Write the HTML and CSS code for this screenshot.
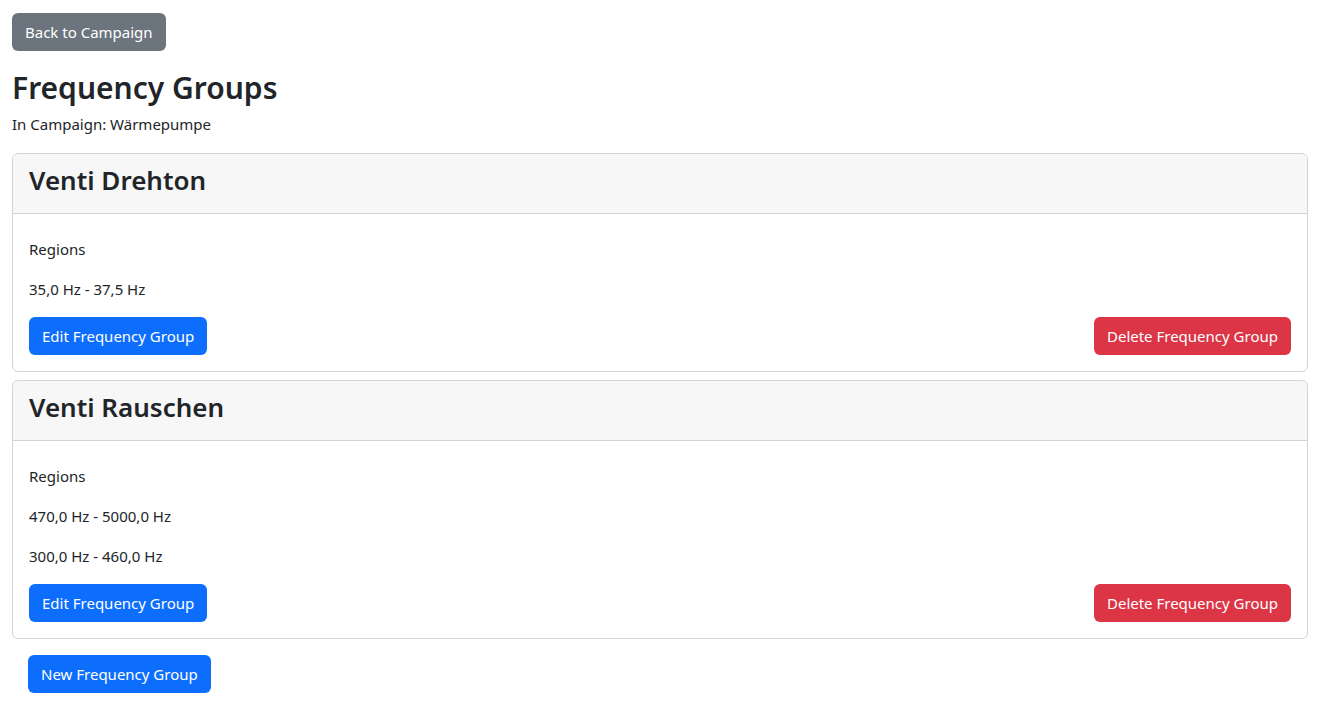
FILE: index.html
```html
<!DOCTYPE html>
<html lang="en">
<head>
  <meta charset="UTF-8">
  <meta name="viewport" content="width=device-width, initial-scale=1.0">
  <title>Frequency Groups</title>
  <link rel="stylesheet" href="styles.css">
</head>
<body>
  <div class="page">
    <a class="btn btn-secondary" href="#">Back to Campaign</a>

    <h2 class="page-title">Frequency Groups</h2>
    <p class="campaign-name">In Campaign: Wärmepumpe</p>

    <!-- Gruppe 1 -->
    <div class="card">
      <div class="card-header">
        <h3>Venti Drehton</h3>
      </div>
      <div class="card-body">
        <p>Regions</p>
        <p>35,0 Hz - 37,5 Hz</p>
        <div class="card-actions">
          <a class="btn btn-primary" href="#">Edit Frequency Group</a>
          <a class="btn btn-danger" href="#">Delete Frequency Group</a>
        </div>
      </div>
    </div>

    <!-- Gruppe 2 -->
    <div class="card">
      <div class="card-header">
        <h3>Venti Rauschen</h3>
      </div>
      <div class="card-body">
        <p>Regions</p>
        <p>470,0 Hz - 5000,0 Hz</p>
        <p>300,0 Hz - 460,0 Hz</p>
        <div class="card-actions">
          <a class="btn btn-primary" href="#">Edit Frequency Group</a>
          <a class="btn btn-danger" href="#">Delete Frequency Group</a>
        </div>
      </div>
    </div>

    <div class="new-group">
      <a class="btn btn-primary" href="#">New Frequency Group</a>
    </div>
  </div>
</body>
</html>
```

FILE: styles.css
```css
/* Grundlayout */
html, body {
  margin: 0;
  padding: 0;
  background: #fff;
}
body {
  font-family: "Noto Sans", "Open Sans", Arial, sans-serif;
  font-size: 15px;
  line-height: 1.5;
  color: #212529;
}
.page {
  padding: 13px 14px 12px 12px;
}

/* Buttons */
.btn {
  display: inline-block;
  box-sizing: border-box;
  height: 38px;
  padding: 6px 13px;
  font-size: 15px;
  line-height: 26px;
  border-radius: 6px;
  color: #fff;
  text-decoration: none;
}
.btn-secondary { background: #6c757d; }
.btn-primary { background: #0d6efd; }
.btn-danger { background: #dc3545; }

/* Überschrift */
.page-title {
  margin: 16px 0 4px;
  font-size: 30px;
  font-weight: 600;
  line-height: 41px;
}
.campaign-name {
  margin: 0 0 17px;
  line-height: 24px;
}

/* Karten */
.card {
  border: 1px solid #d4d4d5;
  border-radius: 6px;
  margin-bottom: 8px;
}
.card-header {
  height: 60px;
  box-sizing: border-box;
  display: flex;
  align-items: center;
  padding: 0 16px 7px;
  background: #f7f7f7;
  border-bottom: 1px solid #d4d4d5;
  border-radius: 6px 6px 0 0;
}
.card-header h3 {
  margin: 0;
  font-size: 26px;
  font-weight: 600;
  line-height: 34px;
}
.card-body {
  padding: 23px 16px 16px;
}
.card-body p {
  margin: 0 0 16px;
  line-height: 24px;
}
.card-actions {
  display: flex;
  justify-content: space-between;
}

.new-group {
  padding: 8px 16px 0;
}
```
